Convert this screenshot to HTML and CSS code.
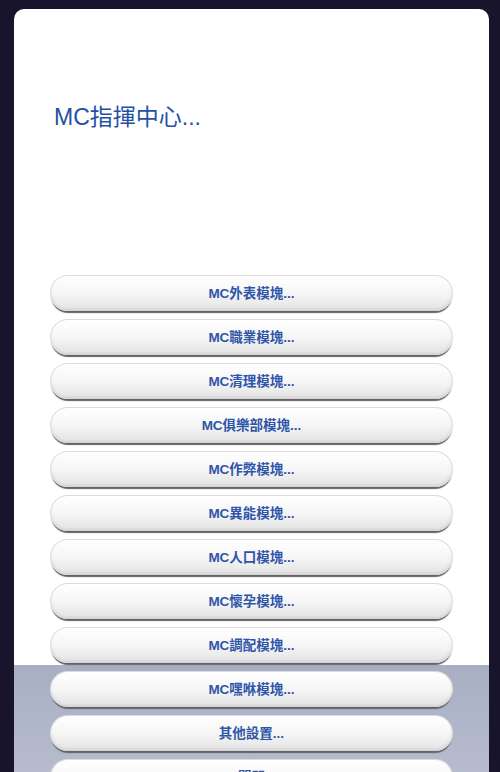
FILE: index.html
```html
<!DOCTYPE html>
<html lang="zh-Hant">
<head>
    <meta charset="UTF-8">
    <meta name="viewport" content="width=device-width, initial-scale=1.0">
    <title>MC指揮中心</title>
    <link rel="stylesheet" href="styles.css">
</head>
<body>
    <div class="dialog">
        <h1 class="dialog-title">MC指揮中心...</h1>
        <div class="menu-list">
            <button class="menu-button">MC外表模塊...</button>
            <button class="menu-button">MC職業模塊...</button>
            <button class="menu-button">MC清理模塊...</button>
            <button class="menu-button">MC俱樂部模塊...</button>
            <button class="menu-button">MC作弊模塊...</button>
            <button class="menu-button">MC異能模塊...</button>
            <button class="menu-button">MC人口模塊...</button>
            <button class="menu-button">MC懷孕模塊...</button>
            <button class="menu-button">MC調配模塊...</button>
            <button class="menu-button">MC嘿咻模塊...</button>
            <button class="menu-button">其他設置...</button>
            <button class="menu-button">關閉</button>
        </div>
    </div>
</body>
</html>
```

FILE: styles.css
```css
body {
    margin: 0;
    height: 772px;
    overflow: hidden;
    background-color: #18142b;
    font-family: "Liberation Sans", "Noto Sans CJK TC", sans-serif;
}

.dialog {
    margin: 9px 0 0 14px;
    width: 475px;
    height: 800px;
    border-radius: 10px 10px 0 0;
    background: linear-gradient(to bottom, #ffffff 656px, #a8afc3 656px, #b6bccd 763px);
    box-sizing: border-box;
    padding: 94px 36px 0 36px;
}

.dialog-title {
    margin: 0 0 0 4px;
    font-size: 23px;
    line-height: 28px;
    font-weight: normal;
    color: #2451a6;
}

.menu-list {
    margin-top: 144px;
    display: flex;
    flex-direction: column;
    gap: 8px;
}

.menu-button {
    height: 36px;
    width: 100%;
    border: 1px solid #dcdcdc;
    border-bottom: none;
    border-radius: 18px;
    background: linear-gradient(to bottom, #ffffff 0%, #f7f7f7 45%, #e3e3e3 100%);
    box-shadow: 0 3px 1px -1px #626268, inset 0 -2px 3px rgba(0, 0, 0, 0.08);
    font-family: "Liberation Sans", "Noto Sans CJK TC", sans-serif;
    font-size: 13.5px;
    font-weight: bold;
    color: #2e55a8;
    padding: 0 0 3px 0;
    cursor: pointer;
}
```
